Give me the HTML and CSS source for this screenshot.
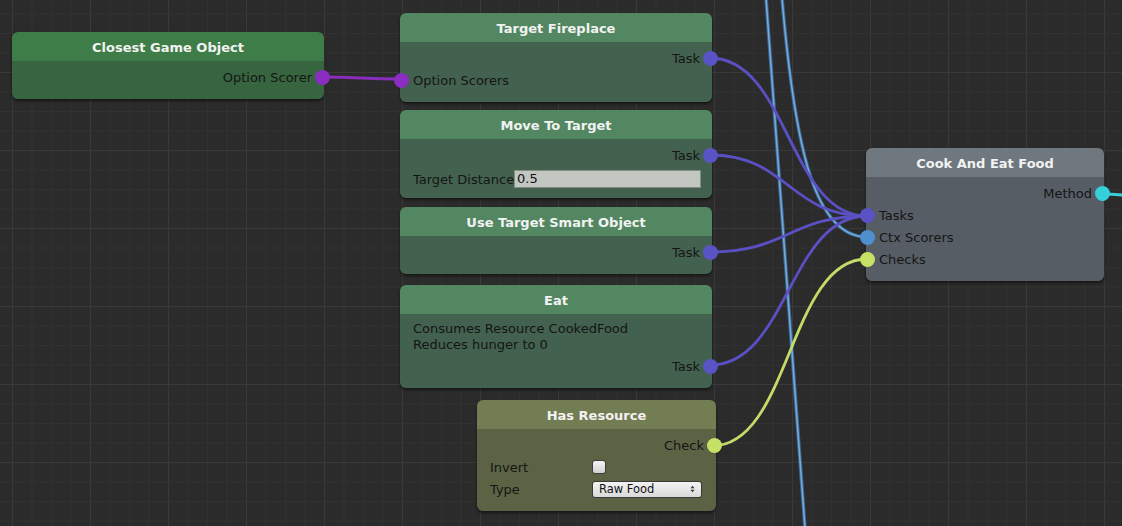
FILE: index.html
```html
<!DOCTYPE html>
<html>
<head>
<meta charset="utf-8">
<link rel="stylesheet" href="styles.css">
</head>
<body>
<div class="canvas">
  <svg class="wires" width="1122" height="526" viewBox="0 0 1122 526">
    <g class="w-blue">
      <path class="edge" d="M766,-2 C776,150 790,330 805,528"/>
      <path class="core" d="M766,-2 C776,150 790,330 805,528"/>
      <path class="edge" d="M782,-2 C795,150 815,237 867,237"/>
      <path class="core" d="M782,-2 C795,150 815,237 867,237"/>
    </g>
    <g class="w-task">
      <path d="M710,58 C788,58 789,216 867,216"/>
      <path d="M710,155 C788,155 789,216 867,216"/>
      <path d="M710,252 C788,252 789,216 867,216"/>
      <path d="M710,365 C788,365 789,216 867,216"/>
    </g>
    <path class="w-opt" d="M321,77 C361,77 361,79 401,79"/>
    <path class="w-check" d="M712,446 C790,446 789,259 867,259"/>
    <path class="w-method" d="M1101,194 C1140,194 1150,203 1190,208"/>
  </svg>

  <div class="node n-closest c-green">
    <div class="head">Closest Game Object</div>
    <div class="body">
      <div class="row out">Option Scorer<span class="port p-opt"></span></div>
    </div>
  </div>

  <div class="node n-fire c-task">
    <div class="head">Target Fireplace</div>
    <div class="body">
      <div class="row out">Task<span class="port p-task"></span></div>
      <div class="row in"><span class="port p-opt"></span>Option Scorers</div>
    </div>
  </div>

  <div class="node n-move c-task">
    <div class="head">Move To Target</div>
    <div class="body">
      <div class="row out">Task<span class="port p-task"></span></div>
      <div class="row field-row">
        <span class="flabel">Target Distance</span>
        <span class="field">0.5</span>
      </div>
    </div>
  </div>

  <div class="node n-use c-task">
    <div class="head">Use Target Smart Object</div>
    <div class="body">
      <div class="row out">Task<span class="port p-task"></span></div>
    </div>
  </div>

  <div class="node n-eat c-task">
    <div class="head">Eat</div>
    <div class="body">
      <div class="desc">Consumes Resource CookedFood<br>Reduces hunger to 0</div>
      <div class="row out">Task<span class="port p-task"></span></div>
    </div>
  </div>

  <div class="node n-has c-olive">
    <div class="head">Has Resource</div>
    <div class="body">
      <div class="row out">Check<span class="port p-check"></span></div>
      <div class="row prop"><span>Invert</span><span class="checkbox"></span></div>
      <div class="row prop"><span>Type</span>
        <span class="dropdown">Raw Food
          <svg class="arrows" width="5" height="8" viewBox="0 0 5 8"><path d="M0.5,3.2 L2.5,0.8 L4.5,3.2Z M0.5,4.8 L2.5,7.2 L4.5,4.8Z"/></svg>
        </span>
      </div>
    </div>
  </div>

  <div class="node n-cook c-gray">
    <div class="head">Cook And Eat Food</div>
    <div class="body">
      <div class="row out">Method<span class="port p-method"></span></div>
      <div class="row in"><span class="port p-task"></span>Tasks</div>
      <div class="row in"><span class="port p-ctx"></span>Ctx Scorers</div>
      <div class="row in"><span class="port p-check"></span>Checks</div>
    </div>
  </div>
</div>
</body>
</html>
```
FILE: styles.css
```css
html, body {
  margin: 0;
  padding: 0;
}
body {
  width: 1122px;
  height: 526px;
  overflow: hidden;
  font-family: "DejaVu Sans", Verdana, sans-serif;
  font-size: 13px;
}
.canvas {
  position: relative;
  width: 1122px;
  height: 526px;
  overflow: hidden;
  background-color: #2b2b2b;
  background-image:
    linear-gradient(to right, #393939 1px, transparent 1px),
    linear-gradient(to bottom, #393939 1px, transparent 1px),
    linear-gradient(to right, #313131 1px, transparent 1px),
    linear-gradient(to bottom, #313131 1px, transparent 1px);
  background-size: 78px 78px, 78px 78px, 19.5px 19.5px, 19.5px 19.5px;
  background-position: 12px 72px, 12px 72px, 12px 13.5px, 12px 13.5px;
}
.wires {
  position: absolute;
  left: 0;
  top: 0;
  fill: none;
  stroke-linecap: round;
}
.w-blue .edge { stroke: #3a6690; stroke-width: 3.6; }
.w-blue .core { stroke: #74aadc; stroke-width: 1.6; }
.w-task path { stroke: #5a50c4; stroke-width: 2.8; }
.w-opt { stroke: #8a2dbe; stroke-width: 3; }
.w-check { stroke: #c3dc68; stroke-width: 2.8; }
.w-method { stroke: #3bcfd8; stroke-width: 3; }

.node {
  position: absolute;
  border-radius: 6px;
  box-shadow: 0 2px 3px rgba(0, 0, 0, 0.5);
  color: #151515;
}
.head {
  box-sizing: border-box;
  height: 29px;
  padding-top: 2px;
  display: flex;
  align-items: center;
  justify-content: center;
  font-weight: bold;
  color: #f2f2f2;
  border-radius: 6px 6px 0 0;
}
.body {
  padding: 5px 0 11px;
  border-radius: 0 0 6px 6px;
}
.row {
  position: relative;
  height: 22px;
  display: flex;
  align-items: center;
  padding: 0 12px 0 13px;
  white-space: nowrap;
}
.row.out { justify-content: flex-end; }
.port {
  position: absolute;
  top: 50%;
  width: 15px;
  height: 15px;
  margin-top: -7.5px;
  border-radius: 50%;
}
.row.out .port { right: -5.5px; }
.row.in .port { left: -6.5px; }
.p-opt { background: #8b2dc1; }
.p-task { background: #5a53c6; }
.p-ctx { background: #4f8fcf; }
.p-check { background: #c6e266; }
.p-method { background: #36d0da; }

.c-green .head { background: #3f7d48; }
.c-green .body { background: #366540; }
.c-task .head { background: #538761; }
.c-task .body { background: #42614e; }
.c-olive .head { background: #727d53; }
.c-olive .body { background: #5b6344; }
.c-gray .head { background: #6e787e; }
.c-gray .body { background: #565d65; }

.n-closest { left: 12px; top: 32px; width: 312px; }
.n-fire { left: 400px; top: 13px; width: 312px; }
.n-move { left: 400px; top: 110px; width: 312px; }
.n-use { left: 400px; top: 207px; width: 312px; }
.n-eat { left: 400px; top: 285px; width: 312px; }
.n-has { left: 477px; top: 400px; width: 239px; }
.n-cook { left: 866px; top: 148px; width: 238px; }

.n-move .body { padding-bottom: 8px; }
.field-row {
  margin-top: 2px;
  display: grid;
  grid-template-columns: 101px 187px;
}
.flabel {
  overflow: hidden;
  white-space: nowrap;
}
.field {
  box-sizing: border-box;
  height: 18px;
  line-height: 16px;
  padding-left: 2px;
  background: #c2c7c2;
  border: 1px solid #858b85;
  color: #111;
}

.desc {
  margin-top: 2px;
  padding-left: 13px;
  line-height: 16px;
}
.n-eat .row.out { margin-top: 2px; }

.prop {
  display: grid;
  grid-template-columns: 102px 1fr;
}
.checkbox {
  box-sizing: border-box;
  width: 14px;
  height: 14px;
  border: 1px solid #3e3e3e;
  border-radius: 3px;
  background: linear-gradient(#f4f4f4, #d2d2d2);
}
.dropdown {
  box-sizing: border-box;
  width: 110px;
  height: 17px;
  display: flex;
  align-items: center;
  justify-content: space-between;
  padding: 0 6px 0 6px;
  border: 1px solid #3a3a3a;
  border-radius: 3px;
  background: linear-gradient(#f3f3f3, #dadada);
  font-size: 11.5px;
  color: #111;
}
.arrows { fill: #333; }
```
